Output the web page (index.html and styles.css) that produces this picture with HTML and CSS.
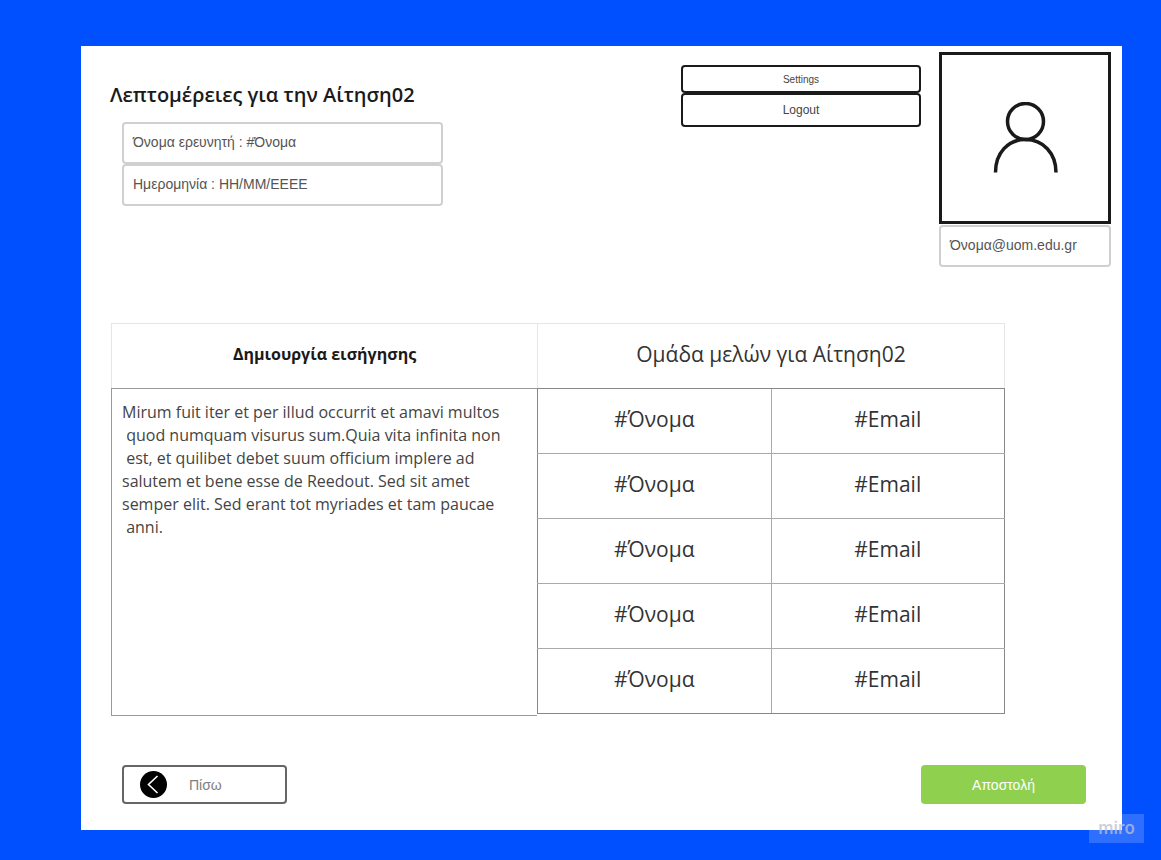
FILE: index.html
```html
<!DOCTYPE html>
<html lang="el">
<head>
<meta charset="utf-8">
<meta name="viewport" content="width=device-width, initial-scale=1">
<title>Λεπτομέρειες για την Αίτηση02</title>
<link rel="stylesheet" href="styles.css">
</head>
<body>
<div class="sheet">
  <header class="top">
    <div class="details">
      <h1 class="title">Λεπτομέρειες για την Αίτηση02</h1>
      <div class="field">Όνομα ερευνητή : #Όνομα</div>
      <div class="field">Ημερομηνία : HH/MM/EEEE</div>
    </div>
    <nav class="menu">
      <button type="button" class="menu-button menu-button-small">Settings</button>
      <button type="button" class="menu-button">Logout</button>
    </nav>
    <div class="profile">
      <div class="avatar">
        <svg class="person" viewBox="0 0 66 72" fill="none" stroke="#1a1a1a" stroke-width="3.500" aria-hidden="true">
          <circle cx="33.500" cy="19.500" r="18"/>
          <path d="M3.500 70.500C3.500 51 16 37.500 33.500 37.500S64 51 64 70.500"/>
        </svg>
      </div>
      <div class="field">Όνομα@uom.edu.gr</div>
    </div>
  </header>

  <main class="panels">
    <section class="proposal">
      <label class="proposal-title" for="proposal">Δημιουργία εισήγησης</label>
      <textarea class="proposal-text" id="proposal" spellcheck="false">Mirum fuit iter et per illud occurrit et amavi multos
 quod numquam visurus sum.Quia vita infinita non
 est, et quilibet debet suum officium implere ad
salutem et bene esse de Reedout. Sed sit amet
semper elit. Sed erant tot myriades et tam paucae
 anni.</textarea>
    </section>
    <table class="members">
      <thead>
        <tr><th colspan="2">Ομάδα μελών για Αίτηση02</th></tr>
      </thead>
      <tbody>
        <tr><td>#Όνομα</td><td>#Email</td></tr>
        <tr><td>#Όνομα</td><td>#Email</td></tr>
        <tr><td>#Όνομα</td><td>#Email</td></tr>
        <tr><td>#Όνομα</td><td>#Email</td></tr>
        <tr><td>#Όνομα</td><td>#Email</td></tr>
      </tbody>
    </table>
  </main>

  <footer class="actions">
    <button type="button" class="action back">
      <svg class="back-icon" viewBox="0 0 28 28" aria-hidden="true">
        <circle cx="13.500" cy="13.500" r="13.500"/>
        <path d="M17.500 5L8.500 13.500L17.500 22" fill="none" stroke="#fff" stroke-width="1.600"/>
      </svg>
      Πίσω
    </button>
    <button type="button" class="action send">Αποστολή</button>
  </footer>
  <div class="badge">miro</div>
</div>
</body>
</html>
```
FILE: styles.css
```css
* {
  box-sizing: border-box;
}

body {
  margin: 0;
  min-height: 100vh;
  padding: 46px 39px 30px 81px;
  display: flex;
  background: #0050ff;
  color: #1a1a1a;
  font-family: "Open Sans", "Noto Sans", sans-serif;
}

button {
  font-family: "Liberation Sans", Arial, sans-serif;
  cursor: pointer;
}

.sheet {
  position: relative;
  flex: 1;
  display: flex;
  flex-direction: column;
  background: #fff;
}

.top {
  display: flex;
  align-items: flex-start;
  gap: 18px;
  padding: 6px 11px 0 29px;
}

.details {
  flex: 1;
  padding-top: 28px;
}

.title {
  margin: 0 0 12px;
  font-size: 20px;
  line-height: 30px;
  font-weight: 600;
}

.field {
  height: 42px;
  padding: 0 9px;
  border: 2px solid #d0d0d0;
  border-radius: 4px;
  font: 14px/36px "Liberation Sans", Arial, sans-serif;
  color: #555;
}

.details .field {
  max-width: 321px;
  margin-left: 12px;
}

.menu {
  display: flex;
  flex-direction: column;
  width: 240px;
  padding-top: 13px;
}

.menu-button {
  height: 34px;
  padding: 0;
  border: 2px solid #1a1a1a;
  border-radius: 4px;
  background: #fff;
  color: #444;
  font-size: 12px;
}

.menu-button-small {
  height: 28px;
  font-size: 10px;
}

.profile {
  width: 172px;
}

.avatar {
  height: 172px;
  margin-bottom: 1px;
  border: 3px solid #1a1a1a;
  display: flex;
  align-items: center;
  justify-content: center;
}

.person {
  width: 66px;
  height: 72px;
}

.panels {
  display: grid;
  grid-template-columns: 426fr 468fr;
  align-items: start;
  margin-top: 56px;
  padding: 0 117px 0 30px;
}

.proposal {
  display: flex;
  flex-direction: column;
}

.proposal-title {
  height: 65px;
  border: 1px solid #e6e6e6;
  border-width: 1px 0 0 1px;
  font-size: 16px;
  line-height: 61px;
  font-weight: 700;
  text-align: center;
}

.proposal-text {
  width: 100%;
  height: 328px;
  padding: 12px 10px;
  border: 1px solid #999;
  border-right: 0;
  resize: none;
  outline: 0;
  background: #fff;
  color: #444;
  font: 400 16px/23px "Open Sans", "Noto Sans", sans-serif;
  white-space: pre-wrap;
}

.members {
  width: 100%;
  table-layout: fixed;
  border-collapse: collapse;
  border: 1px solid #888;
  border-top: 0;
  color: #333;
  font-size: 21px;
}

.members th,
.members td {
  height: 65px;
  padding: 0 0 5px;
  border: 1px solid #aaa;
  line-height: 30px;
  font-weight: 400;
  text-align: center;
}

.members td:first-child {
  border-left-color: #888;
}

.members td:last-child {
  border-right-color: #888;
}

.members tr:last-child td {
  border-bottom-color: #888;
}

.members th {
  border-color: #e6e6e6 #e6e6e6 #888;
}

.actions {
  display: flex;
  justify-content: space-between;
  margin-top: auto;
  padding: 48px 36px 26px 41px;
}

.action {
  display: flex;
  align-items: center;
  width: 165px;
  height: 39px;
  border-radius: 4px;
  font-size: 14px;
}

.back {
  gap: 21px;
  padding: 0 16px;
  border: 2px solid #666;
  background: #fff;
  color: #808080;
}

.back-icon {
  width: 28px;
  height: 28px;
}

.send {
  justify-content: center;
  border: 0;
  background: #8fd14f;
  color: #fff;
}

.badge {
  position: absolute;
  right: -22px;
  bottom: -13px;
  width: 55px;
  height: 29px;
  background: rgba(255, 255, 255, 0.18);
  color: rgba(190, 190, 205, 0.75);
  font: 600 17px/28px Inter, sans-serif;
  text-align: center;
}
```
